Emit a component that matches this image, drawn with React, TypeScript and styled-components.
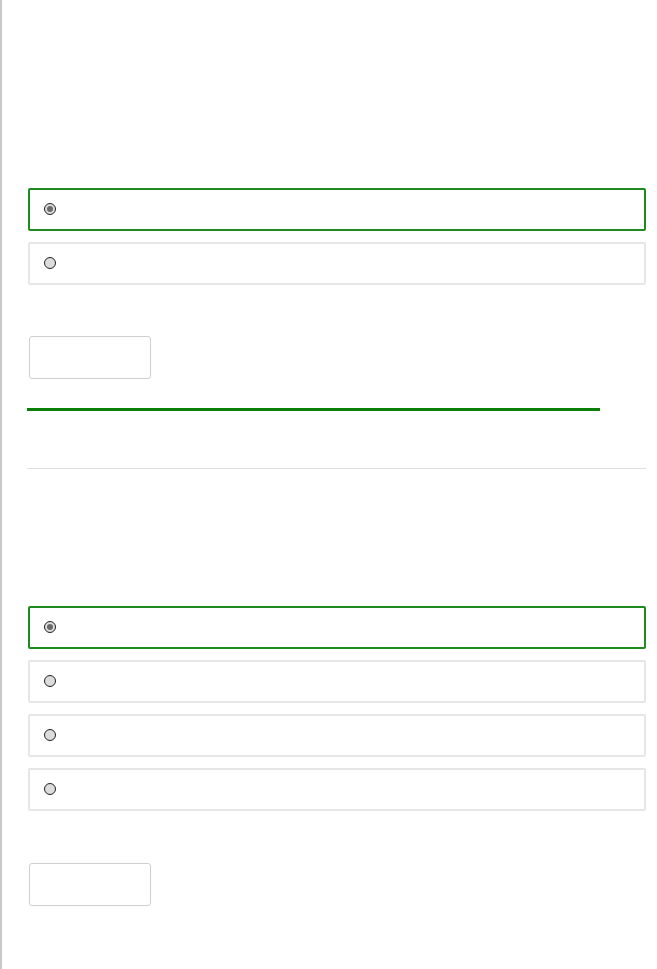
import styled, { createGlobalStyle } from "styled-components";

const GlobalStyle = createGlobalStyle`
  html, body {
    margin: 0;
    padding: 0;
    background: #fff;
    font-family: "Liberation Sans", Arial, sans-serif;
  }
`;

const Page = styled.div`
  box-sizing: border-box;
  min-height: 969px;
  border-left: 2px solid #c8c8c8;
  padding: 0 11px 0 26px;
`;

const Section = styled.section<{ $top: number }>`
  padding-top: ${(p) => p.$top}px;
`;

const Options = styled.div`
  display: flex;
  flex-direction: column;
  gap: 11px;
`;

const Option = styled.label<{ $selected?: boolean }>`
  box-sizing: border-box;
  display: flex;
  align-items: center;
  height: 43px;
  padding: 0 0 1px 14px;
  border: 2px solid ${(p) => (p.$selected ? "#1f8a1f" : "#e6e6e6")};
  border-radius: 2px;
  background: #fff;
`;

const Radio = styled.span<{ $checked?: boolean }>`
  box-sizing: border-box;
  display: inline-flex;
  align-items: center;
  justify-content: center;
  width: 12px;
  height: 12px;
  border: 1px solid #222;
  border-radius: 50%;
  background: #dcdcdc;

  &::after {
    content: "";
    display: ${(p) => (p.$checked ? "block" : "none")};
    width: 6px;
    height: 6px;
    border-radius: 50%;
    background: #6a6a6a;
  }
`;

const Button = styled.button<{ $top: number }>`
  box-sizing: border-box;
  display: block;
  margin-top: ${(p) => p.$top}px;
  margin-left: 1px;
  width: 122px;
  height: 43px;
  border: 1px solid #cfcfcf;
  border-radius: 3px;
  background: #fff;
`;

const Progress = styled.div`
  margin: 29px 0 0 -1px;
  width: 573px;
  height: 3px;
  background: #0a800a;
`;

const Divider = styled.hr`
  margin: 57px 0 0 -1px;
  border: 0;
  height: 1px;
  background: #dedede;
`;

const App = () => {
  return (
    <>
      <GlobalStyle />
      <Page>
        <Section $top={188}>
          <Options>
            <Option $selected>
              <Radio $checked />
            </Option>
            <Option>
              <Radio />
            </Option>
          </Options>
          <Button $top={51} />
          <Progress />
          <Divider />
        </Section>
        <Section $top={137}>
          <Options>
            <Option $selected>
              <Radio $checked />
            </Option>
            <Option>
              <Radio />
            </Option>
            <Option>
              <Radio />
            </Option>
            <Option>
              <Radio />
            </Option>
          </Options>
          <Button $top={52} />
        </Section>
      </Page>
    </>
  );
};

export default App;
